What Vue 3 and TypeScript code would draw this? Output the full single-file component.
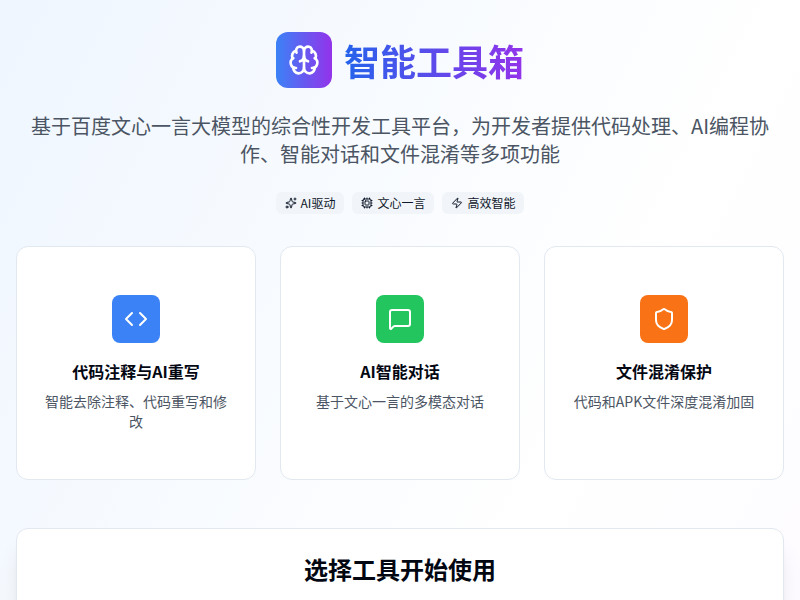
<script setup lang="ts">
interface Badge { label: string; icon: string }
interface Tool { title: string; desc: string; color: string; icon: string }
const badges: Badge[] = [
  { label: 'AI驱动', icon: 'sparkles' },
  { label: '文心一言', icon: 'cpu' },
  { label: '高效智能', icon: 'zap' },
]
const tools: Tool[] = [
  { title: '代码注释与AI重写', desc: '智能去除注释、代码重写和修改', color: '#3b82f6', icon: 'code' },
  { title: 'AI智能对话', desc: '基于文心一言的多模态对话', color: '#22c55e', icon: 'chat' },
  { title: '文件混淆保护', desc: '代码和APK文件深度混淆加固', color: '#f97316', icon: 'shield' },
]
</script>

<template>
  <div class="page">
    <header class="hero">
      <div class="brand">
        <div class="logo">
          <svg width="32" height="32" viewBox="0 0 24 24" fill="none" stroke="#fff" stroke-width="2" stroke-linecap="round" stroke-linejoin="round">
            <path d="M12 18V5" />
            <path d="M15 13a4.17 4.17 0 0 1-3-4 4.17 4.17 0 0 1-3 4" />
            <path d="M17.598 6.5A3 3 0 1 0 12 5a3 3 0 1 0-5.598 1.5" />
            <path d="M17.997 5.125a4 4 0 0 1 2.526 5.77" />
            <path d="M18 18a4 4 0 0 0 2-7.464" />
            <path d="M19.967 17.483A4 4 0 1 1 12 18a4 4 0 1 1-7.967-.517" />
            <path d="M6 18a4 4 0 0 1-2-7.464" />
            <path d="M6.003 5.125a4 4 0 0 0-2.526 5.77" />
          </svg>
        </div>
        <h1 class="title">智能工具箱</h1>
      </div>
      <p class="subtitle">基于百度文心一言大模型的综合性开发工具平台，为开发者提供代码处理、AI编程协作、智能对话和文件混淆等多项功能</p>
      <div class="badges">
        <span v-for="b in badges" :key="b.label" class="badge">
          <svg width="12" height="12" viewBox="0 0 24 24" fill="none" stroke="currentColor" stroke-width="2" stroke-linecap="round" stroke-linejoin="round">
            <template v-if="b.icon === 'sparkles'">
              <path d="M11.017 2.814a1 1 0 0 1 1.966 0l1.051 5.558a2 2 0 0 0 1.594 1.594l5.558 1.051a1 1 0 0 1 0 1.966l-5.558 1.051a2 2 0 0 0-1.594 1.594l-1.051 5.558a1 1 0 0 1-1.966 0l-1.051-5.558a2 2 0 0 0-1.594-1.594l-5.558-1.051a1 1 0 0 1 0-1.966l5.558-1.051a2 2 0 0 0 1.594-1.594z" />
              <path d="M20 2v4" /><path d="M22 4h-4" /><circle cx="4" cy="20" r="2" />
            </template>
            <template v-else-if="b.icon === 'cpu'">
              <path d="M12 20v2M12 2v2M17 20v2M17 2v2M2 12h2M2 17h2M2 7h2M20 12h2M20 17h2M20 7h2M7 20v2M7 2v2" />
              <rect x="4" y="4" width="16" height="16" rx="2" />
              <rect x="8" y="8" width="8" height="8" rx="1" />
            </template>
            <path v-else d="M4 14a1 1 0 0 1-.78-1.63l9.9-10.2a.5.5 0 0 1 .86.46l-1.92 6.02A1 1 0 0 0 13 10h7a1 1 0 0 1 .78 1.63l-9.9 10.2a.5.5 0 0 1-.86-.46l1.92-6.02A1 1 0 0 0 11 14z" />
          </svg>
          {{ b.label }}
        </span>
      </div>
    </header>

    <section class="cards">
      <article v-for="t in tools" :key="t.title" class="card">
        <div class="card-icon" :style="{ background: t.color }">
          <svg width="24" height="24" viewBox="0 0 24 24" fill="none" stroke="#fff" stroke-width="2" stroke-linecap="round" stroke-linejoin="round">
            <template v-if="t.icon === 'code'">
              <path d="m16 18 6-6-6-6" /><path d="m8 6-6 6 6 6" />
            </template>
            <path v-else-if="t.icon === 'chat'" d="M22 17a2 2 0 0 1-2 2H6.828a2 2 0 0 0-1.414.586l-2.202 2.202A.71.71 0 0 1 2 21.286V5a2 2 0 0 1 2-2h16a2 2 0 0 1 2 2z" />
            <path v-else d="M20 13c0 5-3.5 7.5-7.66 8.95a1 1 0 0 1-.67-.01C7.5 20.5 4 18 4 13V6a1 1 0 0 1 1-1c2 0 4.5-1.2 6.24-2.72a1.17 1.17 0 0 1 1.52 0C14.51 3.81 17 5 19 5a1 1 0 0 1 1 1z" />
          </svg>
        </div>
        <h3 class="card-title">{{ t.title }}</h3>
        <p class="card-desc">{{ t.desc }}</p>
      </article>
    </section>

    <section class="panel">
      <h2 class="panel-title">选择工具开始使用</h2>
    </section>
  </div>
</template>

<style>
html, body { margin: 0; padding: 0; }
</style>

<style scoped>
.page {
  box-sizing: border-box;
  padding: 32px 16px;
  background: linear-gradient(to bottom right, #eff6ff 0%, #ffffff 50%, #faf5ff 100%);
  font-family: "Noto Sans CJK SC", "Noto Sans", sans-serif;
  color: #030712;
}
.hero { text-align: center; margin-bottom: 32px; }
.brand { display: flex; justify-content: center; align-items: center; gap: 12px; margin-bottom: 24px; }
.logo {
  width: 56px; height: 56px; border-radius: 12px;
  display: flex; align-items: center; justify-content: center;
  background: linear-gradient(90deg, #3b82f6, #9333ea);
}
.title {
  margin: 0; font-size: 36px; line-height: 40px; font-weight: 700;
  background: linear-gradient(90deg, #2563eb, #9333ea);
  -webkit-background-clip: text; background-clip: text; color: transparent;
}
.subtitle { margin: 0 0 24px; font-size: 20px; line-height: 28px; color: #4b5563; }
.badges { display: flex; justify-content: center; gap: 8px; }
.badge {
  display: inline-flex; align-items: center; gap: 4px;
  height: 22px; padding: 0 9px; border-radius: 6px;
  background: #f1f5f9; color: #0f172a; font-size: 12px; line-height: 16px;
}
.cards { display: grid; grid-template-columns: repeat(3, 1fr); gap: 24px; margin-bottom: 48px; }
.card {
  box-sizing: border-box; padding: 48px 24px; text-align: center;
  background: #fff; border: 1px solid #e2e8f0; border-radius: 12px;
}
.card-icon {
  width: 48px; height: 48px; border-radius: 8px; margin: 0 auto 16px;
  display: flex; align-items: center; justify-content: center;
}
.card-title { margin: 0 0 8px; font-size: 16px; line-height: 24px; font-weight: 600; }
.card-desc { margin: 0; font-size: 14px; line-height: 20px; color: #4b5563; }
.panel {
  padding: 24px; min-height: 1000px; box-sizing: border-box; text-align: center;
  background: #fff; border: 1px solid #e2e8f0; border-radius: 12px;
  box-shadow: 0 20px 25px -5px rgba(0,0,0,.1), 0 8px 10px -6px rgba(0,0,0,.1);
}
.panel-title { margin: 0; font-size: 24px; line-height: 32px; font-weight: 700; }
</style>
